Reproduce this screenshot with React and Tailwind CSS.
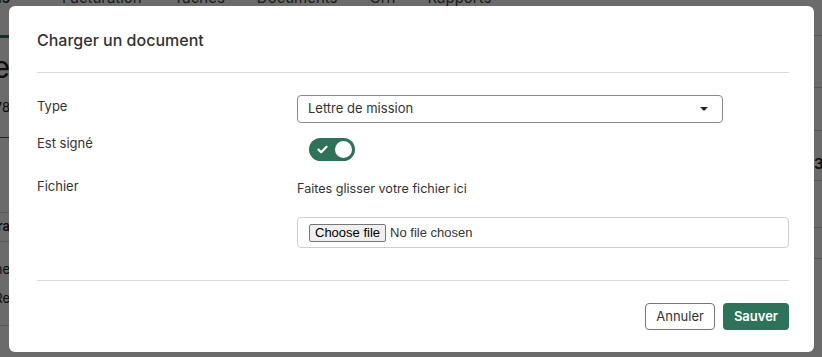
import React from 'react';

const font = { fontFamily: 'Inter, "Liberation Sans", sans-serif' };

function Switch() {
  return (
    <div className="ml-[12px] mt-[5px] flex h-[23px] w-[46px] items-center justify-between rounded-full bg-[#2e7259] pl-[8px] pr-[1px]">
      <svg width="11" height="9" viewBox="0 0 11 9">
        <path d="M1.5 4.6 L4.2 7.2 L9.5 1.8" fill="none" stroke="white" strokeWidth="2.2" strokeLinecap="round" strokeLinejoin="round" />
      </svg>
      <div className="h-[21px] w-[21px] rounded-full border-2 border-[#2e7259] bg-white" />
    </div>
  );
}

function BackgroundPage() {
  return (
    <div className="flex h-[357px] w-full bg-white text-[#222]">
      <div className="flex w-[10px] flex-col items-end overflow-hidden">
        <div className="-mt-[13px] whitespace-nowrap text-[15px] font-semibold">tions</div>
        <div className="mt-[25px] h-[3px] w-full bg-[#2e7259]" />
        <div className="mt-[12px] whitespace-nowrap text-[30px] leading-[34px]">Le</div>
        <div className="mt-[14px] whitespace-nowrap text-[13px]">78</div>
        <div className="mt-[20px] h-px w-full bg-[#555]" />
        <div className="mt-[74px] h-px w-full bg-[#ccc]" />
        <div className="mt-[4px] whitespace-nowrap text-[13px] font-semibold">Tra</div>
        <div className="mt-[4px] h-px w-full bg-[#ccc]" />
        <div className="mt-[18px] whitespace-nowrap text-[13px]">Nne</div>
        <div className="mt-[10px] whitespace-nowrap text-[13px]">Re</div>
        <div className="mt-[16px] h-px w-full bg-[#ccc]" />
      </div>
      <div className="flex flex-1 gap-[32px] pl-[52px]">
        {['Facturation', 'Tâches', 'Documents', 'Grh', 'Rapports'].map((t) => (
          <div key={t} className="-mt-[13px] text-[15px] text-[#444]">{t}</div>
        ))}
      </div>
      <div className="flex w-[8px] flex-col">
        <div className="mt-[35px] h-px w-full bg-[#ccc]" />
        <div className="mt-[51px] h-px w-full bg-[#ccc]" />
        <div className="mt-[42px] h-px w-full bg-[#ccc]" />
        <div className="mt-[22px] text-[15px] font-semibold">3</div>
        <div className="mt-[4px] h-px w-full bg-[#ccc]" />
        <div className="mt-[46px] h-px w-full bg-[#ccc]" />
        <div className="mt-[30px] h-px w-full bg-[#ccc]" />
      </div>
    </div>
  );
}

export default function App() {
  return (
    <div className="relative h-[357px] w-[822px] overflow-hidden" style={font}>
      <BackgroundPage />
      <div className="absolute inset-0 bg-black/[0.58]" />
      <div className="absolute left-[9px] top-[6px] h-[346px] w-[805px] rounded-[6px] bg-white pl-[28px] pr-[25px] pt-[22px] text-[13px] text-[#333]">
        <h2 className="text-[16px] font-medium leading-[24px] text-[#333]">Charger un document</h2>
        <div className="mt-[20px] h-px bg-[#d9d9d9]" />

        <div className="mt-[22px] grid grid-cols-[260px_1fr]">
          <div className="pt-[1px] leading-[20px]">Type</div>
          <div className="flex h-[28px] w-[426px] items-center justify-between rounded-[4px] border border-[#8a8a8a] pl-[10px] pr-[14px]">
            <span>Lettre de mission</span>
            <svg width="8" height="4" viewBox="0 0 8 4"><path d="M0 0 H8 L4 4 Z" fill="#222" /></svg>
          </div>
        </div>

        <div className="mt-[10px] grid grid-cols-[260px_1fr]">
          <div className="leading-[20px]">Est signé</div>
          <div><Switch /></div>
        </div>

        <div className="mt-[15px] grid grid-cols-[260px_1fr]">
          <div className="leading-[20px]">Fichier</div>
          <div className="flex flex-col">
            <div className="pt-[3px] text-[12.6px] leading-[20px]">Faites glisser votre fichier ici</div>
            <div className="mt-[18px] flex h-[31px] items-center rounded-[4px] border border-[#cfcfcf] pl-[11px]" style={{ fontFamily: '"Liberation Sans", Arial, sans-serif' }}>
              <span className="rounded-[2px] border border-[#767676] bg-[#efefef] px-[5px] text-[13px] leading-[16px] text-black">Choose file</span>
              <span className="ml-[4px] text-[13px] text-[#333]">No file chosen</span>
            </div>
          </div>
        </div>

        <div className="mt-[32px] h-px bg-[#d9d9d9]" />

        <div className="mt-[22px] flex justify-end gap-[8px]">
          <button className="h-[27px] rounded-[4px] border border-[#777] bg-white px-[10px] text-[13px] text-[#333]">Annuler</button>
          <button className="h-[27px] rounded-[4px] bg-[#2e7259] px-[11px] text-[13px] font-semibold text-white">Sauver</button>
        </div>
      </div>
    </div>
  );
}
